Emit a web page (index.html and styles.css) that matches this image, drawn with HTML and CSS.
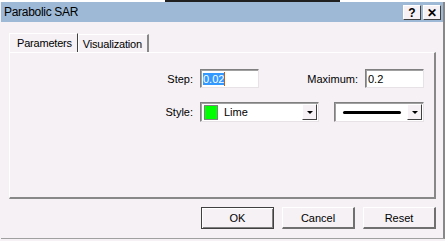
FILE: index.html
```html
<!DOCTYPE html>
<html lang="en">
<head>
    <meta charset="UTF-8">
    <title>Parabolic SAR</title>
    <link rel="stylesheet" href="styles.css">
</head>
<body>
    <div class="backdrop"></div>

    <div class="dialog">
        <div class="titlebar">
            <span class="title">Parabolic SAR</span>
            <div class="title-buttons">
                <span class="tbtn">?</span>
                <span class="tbtn">&#x2715;</span>
            </div>
        </div>

        <div class="tabs">
            <div class="tab active">Parameters</div>
            <div class="tab">Visualization</div>
        </div>

        <div class="panel">
            <div class="row">
                <label class="label">Step:</label>
                <div class="field small"><span class="selected">0.02</span><span class="caret"></span></div>
                <label class="label wide">Maximum:</label>
                <div class="field small">0.2</div>
            </div>
            <div class="row">
                <label class="label">Style:</label>
                <div class="field combo color">
                    <span class="swatch"></span>
                    <span class="combo-text">Lime</span>
                    <span class="drop"></span>
                </div>
                <div class="field combo line">
                    <span class="line-sample"></span>
                    <span class="drop"></span>
                </div>
            </div>
        </div>

        <div class="actions">
            <button class="btn default">OK</button>
            <button class="btn">Cancel</button>
            <button class="btn">Reset</button>
        </div>
    </div>
</body>
</html>
```

FILE: styles.css
```css
body {
    margin: 0;
    width: 445px;
    height: 241px;
    overflow: hidden;
    font-family: 'Liberation Sans', Arial, sans-serif;
    font-size: 11px;
    color: #000;
    background-color: #f5f1f5;
}

.backdrop {
    height: 2px;
    background: linear-gradient(to right, #ffffff 0, #ffffff 165px, #202020 165px, #202020 340px, #ffffff 340px);
}

.dialog {
    height: 236px;
    background-color: #f5f1f5;
    border-right: 2px solid #888888;
    border-bottom: 1px solid #a0a0a0;
    margin-left: 1px;
}

.titlebar {
    height: 20px;
    background-color: #9db9d5;
    display: flex;
    align-items: center;
    justify-content: space-between;
    padding-left: 3px;
}

.title {
    font-size: 12px;
    letter-spacing: -0.3px;
}

.title-buttons {
    display: flex;
    gap: 2px;
    margin-right: 2px;
    margin-top: 1px;
}

.tbtn {
    width: 16px;
    height: 13px;
    background-color: #f5f1f5;
    border-top: 1px solid #ffffff;
    border-left: 1px solid #ffffff;
    border-right: 1px solid #404040;
    border-bottom: 1px solid #404040;
    display: flex;
    align-items: center;
    justify-content: center;
    font-weight: bold;
    font-size: 12px;
    line-height: 1;
}

.tabs {
    display: flex;
    align-items: flex-end;
    height: 20px;
    margin-top: 10px;
    padding-left: 8px;
}

.tab {
    height: 17px;
    padding: 0 5px 0 4px;
    border-top: 1px solid #ffffff;
    border-left: 1px solid #ffffff;
    border-right: 2px solid #888888;
    font-size: 11px;
    letter-spacing: -0.2px;
    display: flex;
    align-items: center;
}

.tab.active {
    height: 19px;
    padding: 3px 5px 0 7px;
    border-right: 1px solid #404040;
    align-items: flex-start;
    box-sizing: border-box;
}

.panel {
    height: 147px;
    box-sizing: border-box;
    margin: 0 7px 0 8px;
    border-top: 1px solid #ffffff;
    border-left: 1px solid #ffffff;
    border-right: 2px solid #888888;
    border-bottom: 2px solid #888888;
    padding-top: 16px;
    display: flex;
    flex-direction: column;
    gap: 14px;
}

.row {
    display: flex;
    align-items: center;
}

.label {
    width: 183px;
    padding-right: 7px;
    text-align: right;
}

.label.wide {
    width: 99px;
}

.field {
    height: 19px;
    box-sizing: border-box;
    background-color: #ffffff;
    border-top: 1px solid #808080;
    border-left: 1px solid #808080;
    border-right: 1px solid #e6e2e6;
    border-bottom: 1px solid #e6e2e6;
    box-shadow: inset 1px 1px 0 #a0a0a0;
    display: flex;
    align-items: center;
    padding-left: 2px;
}

.field.small {
    width: 59px;
}

.selected {
    background-color: #3399ff;
    color: #ffffff;
}

.caret {
    width: 1px;
    height: 14px;
    background-color: #c06020;
}

.combo {
    height: 20px;
    padding: 0 1px 0 3px;
}

.combo.color {
    width: 119px;
}

.combo.line {
    width: 90px;
    margin-left: 15px;
    padding-left: 8px;
}

.swatch {
    width: 12px;
    height: 13px;
    background-color: #00ff00;
    border: 1px solid #808080;
}

.combo-text {
    flex: 1;
    margin-left: 6px;
}

.line-sample {
    flex: 1;
    height: 3px;
    margin-right: 6px;
    background-color: #000000;
    border-radius: 2px;
}

.drop {
    width: 15px;
    height: 16px;
    box-sizing: border-box;
    background-color: #f5f1f5;
    border-top: 1px solid #ffffff;
    border-left: 1px solid #ffffff;
    border-right: 1px solid #404040;
    border-bottom: 1px solid #404040;
    position: relative;
}

.drop::after {
    content: '';
    position: absolute;
    left: 4px;
    top: 6px;
    border-left: 3px solid transparent;
    border-right: 3px solid transparent;
    border-top: 3px solid #000000;
}

.actions {
    display: flex;
    justify-content: flex-end;
    gap: 8px;
    margin-top: 8px;
    margin-right: 7px;
}

.btn {
    width: 73px;
    height: 22px;
    padding: 0;
    font-family: inherit;
    font-size: 11px;
    color: #000000;
    background-color: #f5f1f5;
    border-top: 1px solid #ffffff;
    border-left: 1px solid #ffffff;
    border-right: 2px solid #707070;
    border-bottom: 2px solid #707070;
}

.btn.default {
    border: 1px solid #404040;
    box-shadow: inset 1px 1px 0 #ffffff, inset -1px -1px 0 #808080;
}
```
